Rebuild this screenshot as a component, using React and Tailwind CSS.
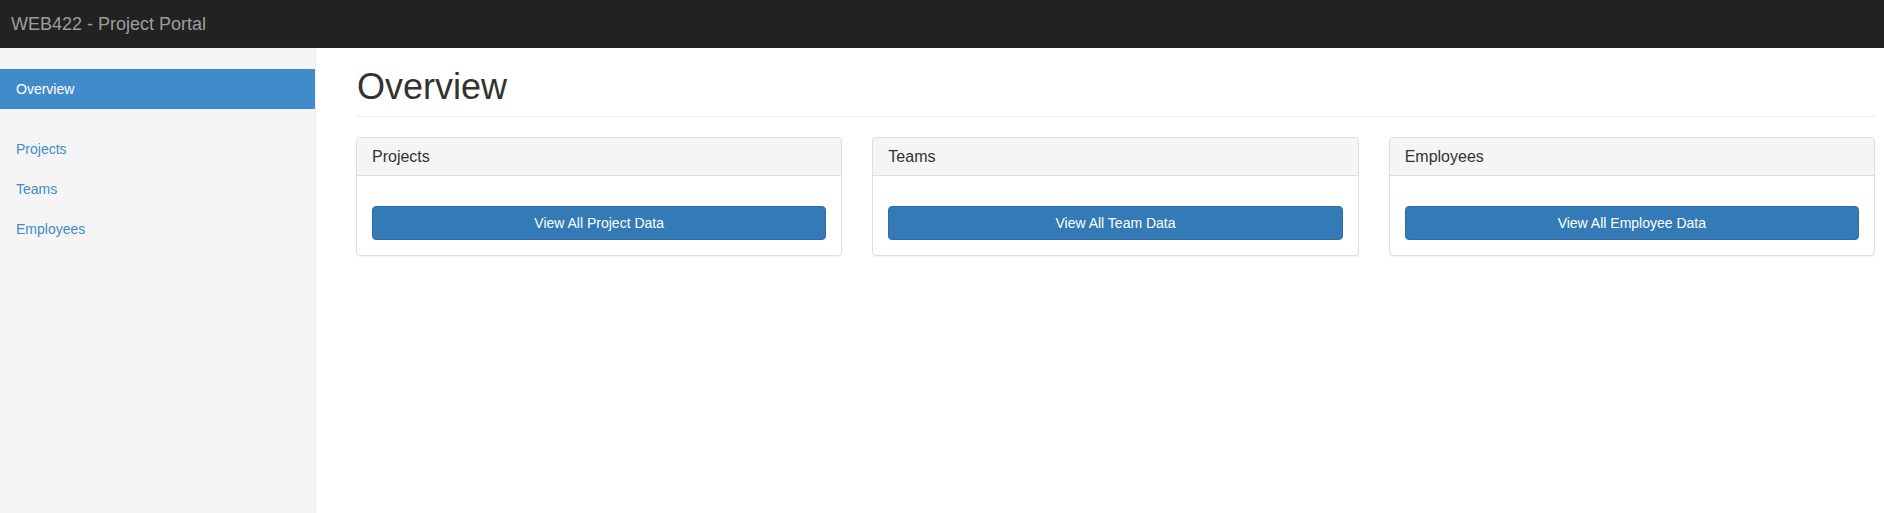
import React from "react";

const cards = [
    { title: "Projects", action: "View All Project Data" },
    { title: "Teams", action: "View All Team Data" },
    { title: "Employees", action: "View All Employee Data" },
];

const links = ["Projects", "Teams", "Employees"];

export default function App() {
    return (
        <div className="min-h-screen flex flex-col bg-white text-[#333] font-['Liberation_Sans',Arial,sans-serif]">
            <nav className="h-12 bg-[#222] flex items-center pl-[11px] shrink-0">
                <span className="text-[18px] text-[#9d9d9d]">
                    WEB422 - Project Portal
                </span>
            </nav>
            <div className="flex flex-1">
                <aside className="w-[316px] shrink-0 bg-[#f5f5f5] border-r border-[#eee] pt-[21px]">
                    <div className="h-10 bg-[#428bca] text-white text-[14px] flex items-center pl-4">
                        Overview
                    </div>
                    <ul className="mt-5">
                        {links.map((l) => (
                            <li
                                key={l}
                                className="h-10 flex items-center pl-4 text-[14px] text-[#428bca]"
                            >
                                {l}
                            </li>
                        ))}
                    </ul>
                </aside>
                <main className="flex-1 pl-10 pr-[9px] pt-[19px]">
                    <h1 className="text-[36px] leading-[1.1] pb-[9px] border-b border-[#eee] pl-px">
                        Overview
                    </h1>
                    <div className="grid grid-cols-3 gap-[30px] mt-5">
                        {cards.map((c) => (
                            <div
                                key={c.title}
                                className="border border-[#ddd] rounded shadow-[0_1px_1px_rgba(0,0,0,0.05)] bg-white"
                            >
                                <div className="bg-[#f5f5f5] border-b border-[#ddd] rounded-t px-[15px] py-[10px] text-[16px] leading-[1.1] text-[#333]">
                                    {c.title}
                                </div>
                                <div className="px-[15px] pt-[30px] pb-[15px]">
                                    <button className="w-full h-[34px] bg-[#337ab7] border border-[#2e6da4] rounded text-white text-[14px]">
                                        {c.action}
                                    </button>
                                </div>
                            </div>
                        ))}
                    </div>
                </main>
            </div>
        </div>
    );
}
